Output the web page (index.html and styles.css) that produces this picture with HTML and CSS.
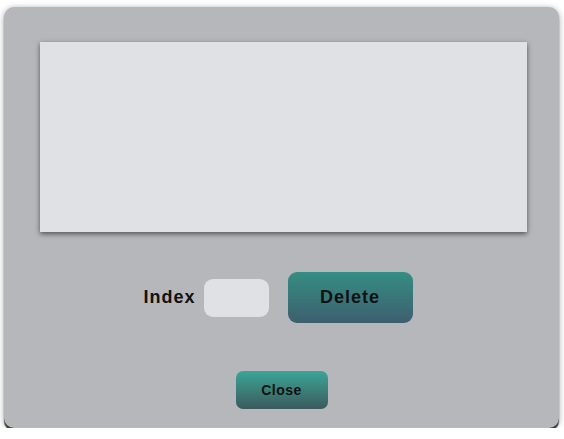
FILE: index.html
```html
<!DOCTYPE html>
<html>
<head>
<meta charset="utf-8">
<link rel="stylesheet" href="styles.css">
</head>
<body>
<div class="dialog">
  <div class="display"></div>
  <div class="controls">
    <span class="label">Index</span>
    <input class="index-input" type="text">
    <button class="btn-delete">Delete</button>
  </div>
  <button class="btn-close">Close</button>
</div>
</body>
</html>
```
FILE: styles.css
```css
html, body {
  margin: 0;
  padding: 0;
  background: #ffffff;
}
body {
  padding: 7px 5px 0 4px;
  font-family: "Liberation Sans", Arial, sans-serif;
}
.dialog {
  width: 555px;
  height: 421px;
  box-sizing: border-box;
  background: #b6b7ba;
  border-radius: 10px;
  box-shadow: 0 3px 1px #3a3a3a, 0 1px 6px rgba(0,0,0,0.35);
  display: flex;
  flex-direction: column;
  align-items: center;
  padding-top: 35px;
}
.display {
  width: 487px;
  height: 190px;
  margin-left: 4px;
  background: #dfe1e5;
  box-shadow: 0 2px 5px rgba(0,0,0,0.55);
}
.controls {
  margin-top: 40px;
  display: flex;
  align-items: center;
  padding-right: 7px;
}
.label {
  font-weight: 700;
  font-size: 18px;
  letter-spacing: 1px;
  color: #111;
  margin-right: 8px;
}
.index-input {
  width: 65px;
  height: 38px;
  box-sizing: border-box;
  border: none;
  border-radius: 9px;
  background: #dfe1e5;
  margin-right: 19px;
  outline: none;
}
.btn-delete {
  width: 125px;
  height: 51px;
  border: none;
  border-radius: 9px;
  background: linear-gradient(#358d83, #3d5f6e);
  font-family: inherit;
  font-weight: 700;
  font-size: 18px;
  letter-spacing: 1px;
  color: #111;
  padding: 0;
}
.btn-close {
  margin-top: 48px;
  width: 92px;
  height: 38px;
  border: none;
  border-radius: 7px;
  background: linear-gradient(#3ba597, #3b5a5c);
  font-family: inherit;
  font-weight: 700;
  font-size: 14px;
  letter-spacing: 0.5px;
  color: #111;
  padding: 0;
}
```
